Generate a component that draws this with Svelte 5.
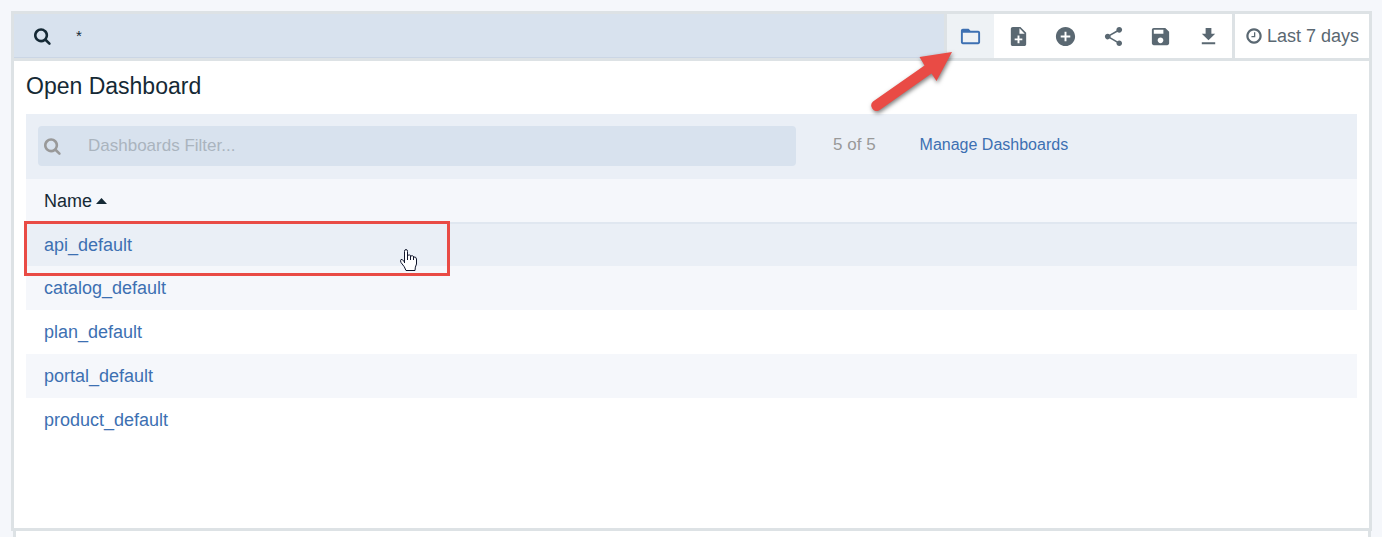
<script>
  const faSearch =
    'M1152 832q0-185-131.500-316.500t-316.500-131.500-316.500 131.500-131.500 316.500 131.500 316.500 316.500 131.500 316.500-131.500 131.500-316.500zm512 832q0 52-38 90t-90 38q-54 0-90-38l-343-342q-179 124-399 124-143 0-273.500-55.500t-225-150-150-225-55.500-273.500 55.500-273.500 150-225 225-150 273.500-55.500 273.500 55.500 225 150 150 225 55.500 273.500q0 220-124 399l343 343q37 37 37 90z';

  const actions = [
    { label: 'Open dashboard', active: true, d: 'M20 6h-8l-2-2H4c-1.100 0-2 .9-2 2v12c0 1.100.9 2 2 2h16c1.100 0 2-.9 2-2V8c0-1.100-.9-2-2-2zm0 12H4V8h16v10z' },
    { label: 'New dashboard', d: 'M14 2H6c-1.100 0-2 .9-2 2v16c0 1.100.9 2 2 2h12c1.100 0 2-.9 2-2V8l-6-6zm2 14h-3v3h-2v-3H8v-2h3v-3h2v3h3v2zm-3-7V3.500L18.500 9H13z' },
    { label: 'Add visualization', d: 'M12 2C6.480 2 2 6.480 2 12s4.480 10 10 10 10-4.480 10-10S17.520 2 12 2zm5 11h-4v4h-2v-4H7v-2h4V7h2v4h4v2z' },
    { label: 'Share', d: 'M18 16.080c-.76 0-1.440.3-1.960.77L8.910 12.700c.05-.23.090-.46.090-.7s-.04-.47-.09-.7l7.050-4.110c.54.5 1.250.81 2.040.81 1.660 0 3-1.340 3-3s-1.340-3-3-3-3 1.340-3 3c0 .24.040.47.090.7L8.040 9.810C7.500 9.310 6.790 9 6 9c-1.660 0-3 1.340-3 3s1.340 3 3 3c.79 0 1.500-.31 2.040-.81l7.120 4.160c-.05.21-.08.43-.08.65 0 1.610 1.310 2.920 2.920 2.920s2.920-1.310 2.920-2.920-1.310-2.920-2.920-2.920z' },
    { label: 'Save', d: 'M17 3H5c-1.110 0-2 .9-2 2v14c0 1.100.89 2 2 2h14c1.100 0 2-.9 2-2V7l-4-4zm-5 16c-1.660 0-3-1.340-3-3s1.340-3 3-3 3 1.340 3 3-1.340 3-3 3zm3-10H5V5h10v4z' },
    { label: 'Export', d: 'M19 9h-4V3H9v6H5l7 7 7-7zM5 18v2h14v-2H5z' }
  ];

  const dashboards = ['api_default', 'catalog_default', 'plan_default', 'portal_default', 'product_default'];
  let query = $state('*');
  let filter = $state('');
  let ascending = $state(true);
  let shown = $derived.by(() => {
    const list = dashboards.filter((name) => name.includes(filter));
    return ascending ? list : list.reverse();
  });
</script>

<div class="page">
  <main class="panel">
    <header class="bar">
      <div class="query">
        <button class="go" aria-label="Search">
          <svg width="18" height="18" viewBox="0 0 1792 1792"><path d={faSearch} /></svg>
        </button>
        <input aria-label="Query" bind:value={query} />
      </div>
      <nav class="actions">
        {#each actions as action}
          <button class:active={action.active} aria-label={action.label}>
            <svg width="23" height="23" viewBox="0 0 24 24"><path d={action.d} /></svg>
          </button>
        {/each}
      </nav>
      <button class="time">
        <svg width="18" height="18" viewBox="0 0 1792 1792"><path d="M1024 544v448q0 14-9 23t-23 9h-320q-14 0-23-9t-9-23v-64q0-14 9-23t23-9h224v-352q0-14 9-23t23-9h64q14 0 23 9t9 23zm416 352q0-148-73-273t-198-198-273-73-273 73-198 198-73 273 73 273 198 198 273 73 273-73 198-198 73-273zm224 0q0 209-103 385.500t-279.500 279.500-385.500 103-385.500-103-279.500-279.500-103-385.500 103-385.500 279.500-279.500 385.500-103 385.500 103 279.500 279.500 103 385.500z" /></svg>
        Last 7 days
      </button>
    </header>

    <section class="open">
      <h1>Open Dashboard</h1>
      <div class="tools">
        <label class="filter">
          <svg width="18" height="18" viewBox="0 0 1792 1792"><path d={faSearch} /></svg>
          <input aria-label="Dashboards filter" placeholder="Dashboards Filter..." bind:value={filter} />
        </label>
        <span class="count">{shown.length} of {dashboards.length}</span>
        <a class="manage" href="#manage">Manage Dashboards</a>
      </div>
      <table>
        <thead>
          <tr>
            <th>
              <button onclick={() => (ascending = !ascending)}>
                Name
                <svg class:down={!ascending} width="11" height="6" viewBox="0 0 11 6"><path d="M5.500 0L11 6H0z" /></svg>
              </button>
            </th>
          </tr>
        </thead>
        <tbody>
          {#each shown as name}
            <tr class:hovered={name === 'api_default'}><td><a href="#{name}">{name}</a></td></tr>
          {/each}
        </tbody>
      </table>
      <div class="highlight"></div>
    </section>
  </main>
  <div class="next"></div>

  <svg class="arrow" width="100" height="76" viewBox="0 0 100 76">
    <path d="M88 6L55.500 11 60.500 19.500 9 55.500A5.500 5.500 0 0 0 15 64.500L67.500 27.500 72.500 35z" fill="#e94b45" />
  </svg>
  <svg class="pointer" width="18" height="23" viewBox="0 0 18 23">
    <path d="M4.500 14V2.500Q4.500.5 6 .5T7.500 2.500V7Q8 5.500 9.500 6T11 7Q12.500 6 14 8Q16 7.500 16.500 10V15Q15 18 15 21.500H6Q5 18 1 13.500Q0 11.500 1 10.500T4.500 13" fill="#fff" stroke="#10152b" />
    <path d="M7.500 6v5M10.500 7v4M13.500 8v3" fill="none" stroke="#10152b" />
  </svg>
</div>

<style>
  :global(body) {
    margin: 0;
    background: #f5f7fb;
  }
  * {
    box-sizing: border-box;
  }
  .page {
    position: relative;
    display: flex;
    flex-direction: column;
    height: 100vh;
    padding: 11px 10px 0 11px;
    font-family: "Liberation Sans", Arial, sans-serif;
    font-size: 17px;
    line-height: 20px;
    color: #152935;
  }
  button,
  input {
    margin: 0;
    padding: 0;
    border: 0;
    background: none;
    font: inherit;
    color: inherit;
  }
  input {
    flex: 1;
    min-width: 0;
    outline: 0;
  }
  svg {
    display: block;
    flex: none;
    fill: currentColor;
  }
  a {
    color: #3d70b2;
    text-decoration: none;
  }
  .panel {
    flex: 1;
    border: 3px solid #dde2e5;
    background: #fff;
  }
  .bar {
    display: flex;
    height: 47px;
    border-bottom: 3px solid #dde2e5;
  }
  .query {
    flex: 1;
    display: flex;
    align-items: center;
    background: #d8e2ee;
    border-bottom: 1px solid #cbd6e5;
  }
  .go {
    padding: 0 24px 0 20px;
  }
  .query input {
    height: 40px;
    font-size: 15px;
  }
  .actions {
    display: grid;
    grid-template-columns: repeat(6, 1fr);
    width: 291px;
    border: solid #dde2e5;
    border-width: 0 3px;
    color: #5a6872;
  }
  .actions button {
    display: flex;
    align-items: center;
    justify-content: center;
  }
  .actions .active {
    background: #eef2f5;
    color: #3d70b2;
  }
  .time {
    display: flex;
    align-items: center;
    gap: 4px;
    padding: 0 10px;
    font-size: 18px;
    color: #5a6872;
  }
  .open {
    position: relative;
    padding: 12px;
  }
  h1 {
    margin: 0 0 14px;
    font-size: 23px;
    line-height: 27px;
    font-weight: 400;
  }
  .tools {
    display: flex;
    align-items: flex-start;
    padding: 12px;
    height: 65px;
    background: #eaeff6;
  }
  .filter {
    display: flex;
    align-items: center;
    gap: 26px;
    width: 58%;
    height: 40px;
    padding: 0 6px;
    border-radius: 4px;
    background: #d8e2ee;
    color: #999;
  }
  .filter input::placeholder {
    color: #aab4be;
    opacity: 1;
  }
  .count,
  .manage {
    line-height: 37px;
  }
  .count {
    margin: 0 44px 0 37px;
    color: #999;
  }
  .manage {
    font-size: 16px;
  }
  table {
    width: 100%;
    border-collapse: separate;
    border-spacing: 0;
    font-size: 18px;
  }
  th {
    height: 45px;
    padding: 0 18px;
    border-bottom: 2px solid #e0e7f0;
    background: #f5f7fb;
    font-weight: 400;
    text-align: left;
  }
  th button {
    display: flex;
    align-items: center;
    gap: 4px;
  }
  .down {
    transform: rotate(180deg);
  }
  td {
    height: 44px;
    padding: 0 18px;
  }
  tbody tr:nth-child(even) {
    background: #f5f7fb;
  }
  tbody .hovered td {
    height: 42px;
    background: #eaeff6;
  }
  .highlight {
    position: absolute;
    top: 160px;
    left: 10px;
    width: 426px;
    height: 55px;
    border: 3px solid #e94b45;
    pointer-events: none;
  }
  .next {
    height: 6px;
    margin: 0 1px 0 2px;
    border: solid #dde2e5;
    border-width: 0 3px;
    background: #fff;
  }
  .arrow {
    position: absolute;
    top: 46px;
    left: 864px;
    filter: drop-shadow(1px 2px 2px rgba(0, 0, 0, 0.5));
    pointer-events: none;
  }
  .pointer {
    position: absolute;
    top: 249px;
    left: 400px;
    pointer-events: none;
  }
</style>
